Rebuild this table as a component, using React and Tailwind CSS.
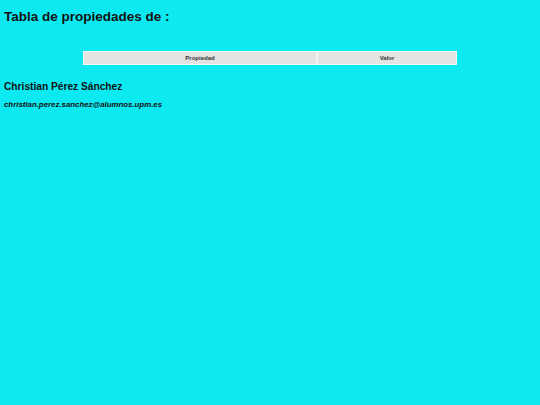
import React from 'react';

const App = () => {
  return (
    <div className="w-[540px] h-[405px] bg-[#0de9f1] font-['Liberation_Sans',Arial,sans-serif] text-[#111] px-[4px] pt-[9px]">
      <h1 className="text-[13.5px] font-bold leading-[16px]">Tabla de propiedades de :</h1>
      <div className="flex justify-center mt-[26px]">
        <div className="w-[374px] flex gap-[2px] border border-[#eefafa] bg-[#f2f2f2]">
          <div className="w-[232px] h-[12px] bg-[#e4e4e4] flex items-center justify-center text-[6px] font-bold text-[#333]">Propiedad</div>
          <div className="flex-1 h-[12px] bg-[#e4e4e4] flex items-center justify-center text-[6px] font-bold text-[#333]">Valor</div>
        </div>
      </div>
      <h2 className="text-[10.2px] font-bold leading-[14px] mt-[15px]">Christian Pérez Sánchez</h2>
      <p className="text-[7.85px] font-bold italic leading-[10px] mt-[6px]">christian.perez.sanchez@alumnos.upm.es</p>
    </div>
  );
};

export default App;
